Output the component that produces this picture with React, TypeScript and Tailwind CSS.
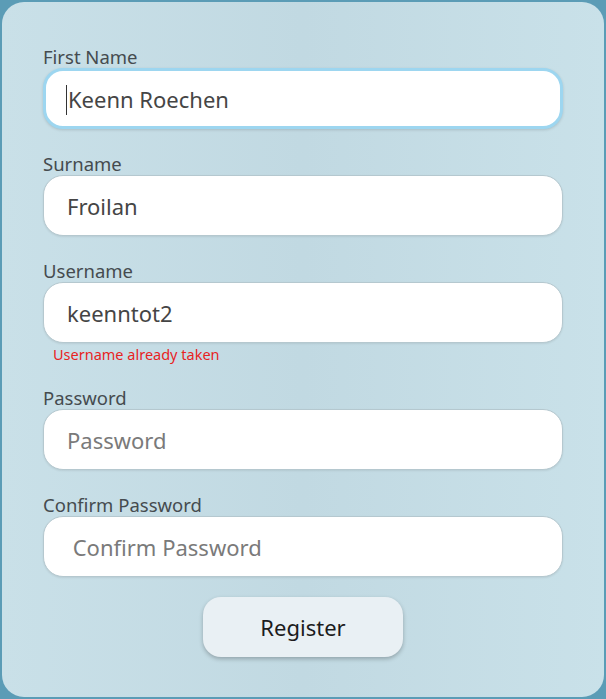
import React from "react"

const fields = [
  { label: "First Name", value: "Keenn Roechen", placeholder: "", focused: true },
  { label: "Surname", value: "Froilan", placeholder: "" },
  { label: "Username", value: "keenntot2", placeholder: "", error: "Username already taken" },
  { label: "Password", value: "", placeholder: "Password" },
  { label: "Confirm Password", value: "", placeholder: " Confirm Password" },
]

function Field({ label, value, placeholder, focused, error }: { label: string; value: string; placeholder: string; focused?: boolean; error?: string }) {
  return (
    <div className="flex flex-col">
      <label className="text-[18.5px] leading-[22px] text-[#454b4f]">{label}</label>
      <div
        className={`h-[61px] rounded-[20px] bg-white flex items-center pl-[23px] pt-[2px] text-[22px] ${
          focused
            ? "border-[3px] border-[#9dd6f0] shadow-[0_1px_3px_rgba(0,0,0,0.15)]"
            : "border border-[#b5c8cf] shadow-[0_1px_2px_rgba(0,0,0,0.08)]"
        }`}
      >
        {focused && <span className="w-px h-[30px] bg-[#333] -ml-[3px] mr-[1px]" />}
        {value ? (
          <span className="text-[#454545]">{value}</span>
        ) : (
          <span className="text-[#7a7a7a] whitespace-pre">{placeholder}</span>
        )}
      </div>
      {error && <p className="text-[14.5px] leading-[18px] text-[#e8231f] pl-[10px] mt-[2px]">{error}</p>}
    </div>
  )
}

export default function App() {
  return (
    <div className="w-[606px] h-[699px] bg-[#5b9cb6] p-[2px]" style={{ fontFamily: '"Segoe UI", "Noto Sans", sans-serif' }}>
      <div className="h-full rounded-[22px] bg-gradient-to-r from-[#c9e0e8] via-[#c1d9e2] to-[#c9e1e9] px-[41px] pt-[44px]">
        <div className="flex flex-col gap-[24px]">
          {fields.map((f) => (
            <Field key={f.label} {...f} />
          ))}
        </div>
        <div className="flex justify-center mt-[20px]">
          <button className="w-[200px] h-[60px] rounded-[18px] bg-[#e9f0f4] text-[22px] text-[#1c1c1c] shadow-[0_2px_4px_rgba(0,0,0,0.25)]">
            Register
          </button>
        </div>
      </div>
    </div>
  )
}
